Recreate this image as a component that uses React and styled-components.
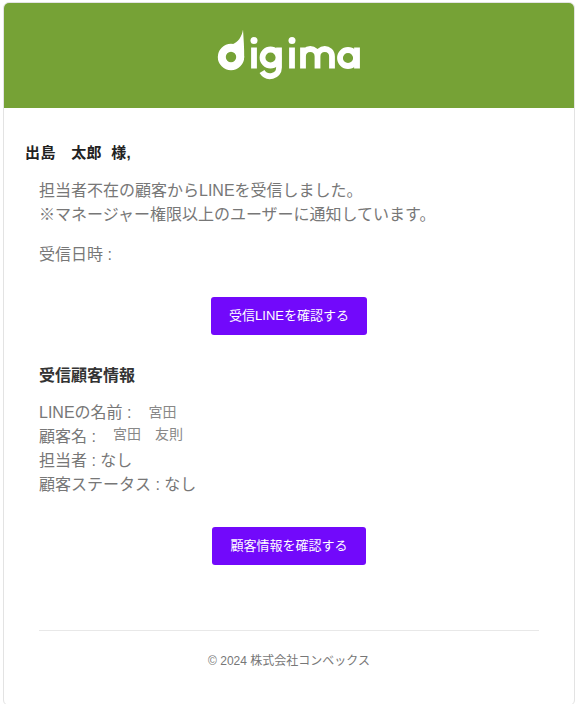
import React from "react";
import styled, { createGlobalStyle } from "styled-components";

const GlobalStyle = createGlobalStyle`
  html, body {
    margin: 0;
    padding: 0;
    background: #fff;
  }
  body {
    font-family: "Liberation Sans", Arial, "Noto Sans CJK JP", sans-serif;
  }
`;

const Page = styled.div`
  width: 577px;
  height: 704px;
  padding: 2px 2px 0 3px;
  box-sizing: border-box;
  overflow: hidden;
`;

const Card = styled.div`
  height: 704px;
  box-sizing: border-box;
  border: 1px solid #e3e3e3;
  border-radius: 6px;
  overflow: hidden;
`;

const Header = styled.div`
  height: 105px;
  background: #76a236;
  display: flex;
  align-items: center;
  justify-content: center;
`;

const Body = styled.div`
  padding: 35px 35px 0 21px;
`;

const Greeting = styled.div`
  font-size: 15px;
  line-height: 20px;
  font-weight: 700;
  letter-spacing: 0.4px;
  color: #222;
`;

const Content = styled.div`
  padding-left: 14px;
`;

const Message = styled.p`
  margin: ${(p) => p.$top}px 0 0;
  font-size: 16px;
  line-height: 24px;
  color: #777;
`;

const ButtonRow = styled.div`
  display: flex;
  justify-content: center;
  margin: ${(p) => p.$top}px 0 0;
`;

const Button = styled.a`
  height: 38px;
  box-sizing: border-box;
  padding: 0 18px 3px;
  display: flex;
  align-items: center;
  background: #7209fb;
  border-radius: 3px;
  color: #fff;
  font-size: 13px;
`;

const Heading = styled.h2`
  margin: 29px 0 0;
  font-size: 16px;
  line-height: 24px;
  font-weight: 700;
  color: #333;
`;

const InfoList = styled.div`
  margin-top: 13px;
`;

const InfoRow = styled.div`
  font-size: 16px;
  line-height: 24px;
  height: 24px;
  color: #777;
`;

const Value = styled.span`
  font-size: 14px;
  color: #888;
  margin-left: ${(p) => p.$left}px;
  position: relative;
  top: ${(p) => p.$up}px;
`;

const Footer = styled.div`
  margin: 65px 0 0;
  border-top: 1px solid #e8e8e8;
  padding-top: 22px;
  text-align: center;
  font-size: 12px;
  line-height: 16px;
  color: #777;
`;

const Logo = () => (
  <svg width="144" height="56" viewBox="217 27.5 144 56" fill="none" stroke="#fff" strokeWidth="5.8">
    <circle cx="231" cy="56.5" r="9.2" strokeWidth="8" />
    <path d="M243 29 C243.6 38 244.3 48 244.2 57 L232 44 C238 42 242 36 243 29 Z" fill="#fff" stroke="none" />
    <circle cx="254" cy="40" r="3.5" fill="#fff" stroke="none" />
    <path d="M254 47 V68" />
    <circle cx="270.5" cy="57" r="8" />
    <path d="M279 47 V67 C279 76 267 79 262 71" />
    <circle cx="292" cy="40" r="3.5" fill="#fff" stroke="none" />
    <path d="M292 47 V68" />
    <path d="M303 68 V47 M303 56 C303 46 317.5 46 317.5 56 V68 M317.5 56 C317.5 46 332 46 332 56 V68" />
    <circle cx="348" cy="57.5" r="8" />
    <path d="M357 47 V68" />
  </svg>
);

export default function App() {
  return (
    <Page>
      <GlobalStyle />
      <Card>
        <Header>
          <Logo />
        </Header>
        <Body>
          <Greeting>出島　太郎&nbsp;&nbsp;様,</Greeting>
          <Content>
            <Message $top={16}>
              担当者不在の顧客からLINEを受信しました。
              <br />
              ※マネージャー権限以上のユーザーに通知しています。
            </Message>
            <Message $top={16}>受信日時 :</Message>
            <ButtonRow $top={30}>
              <Button>受信LINEを確認する</Button>
            </ButtonRow>
            <Heading>受信顧客情報</Heading>
            <InfoList>
              <InfoRow>
                LINEの名前 :<Value $left={17} $up={-1}>宮田</Value>
              </InfoRow>
              <InfoRow>
                顧客名 :<Value $left={17} $up={-3}>宮田　友則</Value>
              </InfoRow>
              <InfoRow>担当者 : なし</InfoRow>
              <InfoRow>顧客ステータス : なし</InfoRow>
            </InfoList>
            <ButtonRow $top={30}>
              <Button>顧客情報を確認する</Button>
            </ButtonRow>
            <Footer>© 2024 株式会社コンベックス</Footer>
          </Content>
        </Body>
      </Card>
    </Page>
  );
}
